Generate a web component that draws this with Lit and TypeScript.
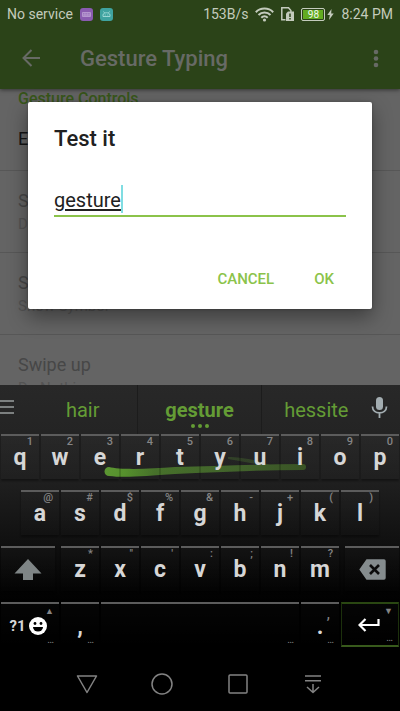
import { LitElement, html, svg, css, nothing } from "lit";
import { customElement, property } from "lit/decorators.js";
import { classMap } from "lit/directives/class-map.js";

@customElement("status-bar")
class StatusBar extends LitElement {
  static styles = css`
    :host {
      display: flex;
      align-items: center;
      height: 28px;
      padding: 0 7px;
      font-size: 14px;
      line-height: 20px;
      color: #c4cbbd;
      white-space: nowrap;
    }
    svg { display: block; flex: none; }
    .left, .right { display: flex; align-items: center; }
    .left { flex: 1; gap: 7px; }
    .right { gap: 7px; }
    .power { display: flex; align-items: center; gap: 1px; }
    .battery {
      position: relative;
      display: flex;
      align-items: center;
      justify-content: center;
      box-sizing: border-box;
      width: 24px;
      height: 13px;
      margin-right: 1px;
      border: 1px solid #c4cbbd;
      border-radius: 2px;
      background: #62ab20;
      box-shadow: inset 0 0 0 1px #2b4318;
      color: #f2f7ec;
      font-size: 10px;
      line-height: 11px;
    }
  `;
  render() {
    return html`
      <div class="left">
        <span>No service</span>
        <svg width="13" height="13" viewBox="0 0 13 13" aria-hidden="true">
          <rect width="13" height="13" rx="3" fill="#8a5bb0" />
          <rect x="2" y="4" width="9" height="5" rx="1" fill="#b596cf" />
          <path d="M3 5.5h7M3 7h7" stroke="#8a5bb0" stroke-width=".6" stroke-dasharray="1 .6" />
        </svg>
        <svg width="13" height="13" viewBox="0 0 13 13" aria-hidden="true">
          <rect width="13" height="13" rx="3" fill="#3fa3a0" />
          <path d="M3 8.500V7c0-3 7-3 7 0v1.500z M3.500 3.500l1 1.300 M9.500 3.500l-1 1.300" fill="none" stroke="#a5dcd9" stroke-width=".9" />
          <path d="M4.800 7h.8M7.400 7h.8" stroke="#a5dcd9" />
        </svg>
      </div>
      <div class="right">
        <span>153B/s</span>
        <svg width="19" height="15" viewBox="0 0 19 15" fill="none" stroke="#c4cbbd" stroke-width="2" aria-hidden="true">
          <path d="M.8 5.200C5.500.4 13.500.4 18.200 5.200M3.500 8c3.300-3.400 8.700-3.400 12 0M6.300 10.700c1.800-1.800 4.600-1.800 6.400 0" />
          <circle cx="9.500" cy="13" r="1.600" fill="#c4cbbd" stroke="none" />
        </svg>
        <svg width="13" height="14" viewBox="0 0 13 14" aria-hidden="true">
          <path d="M4.500 12.700H.8V.8h6.700l2.400 2.700V5" fill="none" stroke="#c4cbbd" stroke-width="1.500" />
          <path d="M5 14V6.500L7 4.500h6V14z" fill="#c4cbbd" />
          <path d="M9 6.500v3.500M9 11v1.500" stroke="#2b4318" stroke-width="1.500" />
        </svg>
        <span class="power">
          <span class="battery">98</span>
          <svg width="7" height="13" viewBox="0 0 7 13" aria-hidden="true">
            <path d="M4.500 1L.3 7h2.500L2 12l4.700-6.500H4.200z" fill="#c4cbbd" />
          </svg>
        </span>
        <span>8:24 PM</span>
      </div>
    `;
  }
}

interface Setting { title: string; summary?: string; enabled?: boolean }

const settings: Setting[] = [
  { title: "E", enabled: true },
  { title: "S", summary: "D" },
  { title: "S", summary: "Show Symbol" },
  { title: "Swipe up", summary: "Do Nothing" },
];

@customElement("settings-page")
class SettingsPage extends LitElement {
  static styles = css`
    :host { display: block; background: #646464; }
    .head { position: relative; background: #2b4318; box-shadow: 0 1px 4px #00000080; }
    .bar {
      display: flex;
      align-items: center;
      height: 61px;
      padding: 0 16px 0 20px;
      box-sizing: border-box;
    }
    .bar button { display: flex; padding: 0; border: 0; background: none; color: #676a65; }
    h1 { flex: 1; margin: 0 0 0 36px; font-size: 22px; font-weight: 500; line-height: 28px; color: #676a65; }
    h2 { margin: 0; padding: 0 18px; font-size: 16px; font-weight: 500; line-height: 20px; color: #38571a; }
    ul { margin: 0; padding: 0; list-style: none; }
    li {
      box-sizing: border-box;
      height: 82px;
      padding: 18px 18px 0;
      border-top: 1px solid #575757;
      color: #474747;
      font-size: 18px;
      line-height: 24px;
    }
    li.enabled { height: 61px; border-top: 0; color: #141414; }
    small { display: block; font-size: 15px; line-height: 22px; color: #535353; }
  `;
  render() {
    return html`
      <div class="head">
        <status-bar></status-bar>
        <div class="bar">
          <button aria-label="Back">
            <svg width="24" height="24" viewBox="0 0 24 24" fill="none" stroke="currentColor" stroke-width="2">
              <path d="M20 11H4M11.500 3L3.500 11l8 8" />
            </svg>
          </button>
          <h1>Gesture Typing</h1>
          <button aria-label="More options">
            <svg width="16" height="24" viewBox="0 0 16 24" fill="currentColor">
              <circle cx="8" cy="5" r="2.300" /><circle cx="8" cy="11.500" r="2.300" /><circle cx="8" cy="18" r="2.300" />
            </svg>
          </button>
        </div>
      </div>
      <h2>Gesture Controls</h2>
      <ul>
        ${settings.map((s) => html`
          <li class=${classMap({ enabled: !!s.enabled })}>
            ${s.title}${s.summary ? html`<small>${s.summary}</small>` : nothing}
          </li>`)}
      </ul>
    `;
  }
}

@customElement("test-dialog")
class TestDialog extends LitElement {
  static styles = css`
    :host {
      display: block;
      box-sizing: border-box;
      padding: 24px 26px 12px;
      background: #fff;
      border-radius: 2px;
      box-shadow: 0 8px 20px #00000066, 0 0 3px #00000040;
    }
    label { display: block; font-size: 22px; font-weight: 500; line-height: 26px; color: #212121; }
    .field {
      display: flex;
      align-items: flex-end;
      height: 32px;
      margin-top: 31px;
      border-bottom: 2px solid #8bc34a;
    }
    input {
      field-sizing: content;
      height: 30px;
      padding: 0;
      border: 0;
      outline: 0;
      background: none;
      font: 20px/30px Roboto, sans-serif;
      color: #212121;
      text-decoration: underline;
      text-underline-offset: 2px;
    }
    .caret { width: 2px; height: 28px; margin-bottom: 2px; background: #80dde2; }
    .actions { display: flex; justify-content: flex-end; gap: 24px; margin-top: 44px; }
    .actions button {
      height: 36px;
      padding: 0 12px 0 8px;
      border: 0;
      background: none;
      font: 500 15px/20px Roboto, sans-serif;
      color: #8bc34a;
    }
    .actions button:first-child { padding-right: 8px; }
  `;
  render() {
    return html`
      <label for="word">Test it</label>
      <div class="field"><input id="word" type="text" .value=${"gesture"} value="gesture" /><span class="caret"></span></div>
      <div class="actions"><button>CANCEL</button><button>OK</button></div>
    `;
  }
}

const shiftIcon = svg`<svg width="28" height="22" viewBox="0 0 28 22"><path d="M14 0L27.500 14.500H19V21H9V14.500H.5z" fill="#7f8586"/></svg>`;
const deleteIcon = svg`<svg width="27" height="21" viewBox="0 0 27 21"><path d="M7.500.3H25a1.700 1.700 0 0 1 1.700 1.700v17a1.700 1.700 0 0 1-1.700 1.700H7.500L.3 10.500z" fill="#858c8e"/><path d="M11 6l9 9M20 6l-9 9" stroke="#0c0c0c" stroke-width="2.600"/></svg>`;
const smileIcon = svg`<svg width="18" height="18" viewBox="0 0 18 18"><circle cx="9" cy="9" r="9" fill="#fff"/><circle cx="6" cy="6.500" r="1.400"/><circle cx="12" cy="6.500" r="1.400"/><path d="M4 10h10a5 4.500 0 0 1-10 0z"/></svg>`;
const enterIcon = svg`<svg width="22" height="14" viewBox="0 0 22 14" fill="none" stroke="#fff" stroke-width="2.200"><path d="M20.500 1v6H2M7.500 1L1.500 7l6 6"/></svg>`;

interface Key {
  label?: string;
  name?: string;
  icon?: unknown;
  hint?: string;
  span?: number;
  kind?: string;
  arrow?: string;
  more?: boolean;
}

const keys = (letters: string, hints: string): Key[] =>
  [...letters].map((label, i) => ({ label, hint: hints[i] }));

const rows: Key[][] = [
  keys("qwertyuiop", "1234567890"),
  keys("asdfghjkl", "@#$%&-+()"),
  [
    { name: "Shift", icon: shiftIcon, span: 3, kind: "shift" },
    ...keys("zxcvbnm", "*\"':;!?"),
    { name: "Delete", icon: deleteIcon, span: 3, kind: "delete" },
  ],
  [
    { label: "?1", name: "Symbols and emoji", icon: smileIcon, span: 3, kind: "symbols", arrow: "▲", more: true },
    { label: ",", kind: "mark", more: true },
    { name: "Space", span: 10, more: true },
    { label: ".", kind: "mark", hint: ",", more: true },
    { name: "Enter", icon: enterIcon, span: 3, kind: "enter", arrow: "▼", more: true },
  ],
];

@customElement("key-button")
class KeyButton extends LitElement {
  @property({ attribute: false }) key: Key = {};
  static styles = css`
    :host { display: block; }
    button {
      position: relative;
      display: flex;
      align-items: center;
      justify-content: center;
      box-sizing: border-box;
      width: 100%;
      height: 45px;
      padding: 0;
      border: 0;
      border-top: 2px solid #5c5c5c;
      background: linear-gradient(#ffffff05, #ffffff00);
      box-shadow: 0 2px 2px #00000060;
      color: #d6d6d6;
      font: bold 23px/26px Roboto, sans-serif;
    }
    svg { display: block; flex: none; }
    .symbols { gap: 3px; padding-right: 4px; font-size: 15px; }
    .mark { padding-top: 2px; }
    .enter { border: 1px solid #1c300c; border-top: 2px solid #2a4712; border-bottom: 2px solid #385a1c; padding-right: 2px; }
    .hint, .arrow, .more { position: absolute; color: #858585; font-size: 11px; line-height: 12px; }
    .hint { top: 0; right: 6px; font-weight: 500; }
    .mark .hint { top: 4px; right: 9px; font-size: 14px; }
    .arrow { top: 1px; right: 5px; font-size: 9px; }
    .more { right: 5px; bottom: 1px; font-size: 10px; font-weight: 400; }
  `;
  render() {
    const k = this.key;
    return html`
      <button class=${k.kind ?? "letter"} aria-label=${k.name ?? k.label ?? ""}>
        ${k.label ? html`<span>${k.label}</span>` : nothing}${k.icon ?? nothing}
        ${k.hint ? html`<span class="hint">${k.hint}</span>` : nothing}
        ${k.arrow ? html`<span class="arrow">${k.arrow}</span>` : nothing}
        ${k.more ? html`<span class="more">…</span>` : nothing}
      </button>
    `;
  }
}

@customElement("soft-keyboard")
class SoftKeyboard extends LitElement {
  static styles = css`
    :host { display: block; background: linear-gradient(#282828, #202020 34%, #101010 58%, #000 80%); }
    .strip { display: flex; height: 49px; }
    .strip button { position: relative; padding: 0; border: 0; background: none; font: 20px/46px Roboto, sans-serif; color: #649c35; }
    .strip .menu { width: 28px; display: flex; padding-top: 14px; }
    .strip .word { flex: 110 1 0; }
    .strip .chosen {
      flex-grow: 123;
      font-weight: bold;
      border: solid #1c1c1c;
      border-width: 0 1px;
    }
    .dots { position: absolute; left: 0; right: 0; bottom: 6px; display: flex; justify-content: center; gap: 3px; }
    .dots i { width: 4px; height: 4px; border-radius: 50%; background: #649c35; }
    .strip .mic { width: 29px; display: flex; padding-top: 11px; }
    .rows { position: relative; }
    .row { display: grid; grid-template-columns: repeat(20, minmax(0, 1fr)); height: 56px; }
    key-button { grid-column: span 2; margin: 0 1px; }
    .wide { grid-column: span 3; }
    .space { grid-column: span 10; }
    .indent { grid-column: 2 / span 2; }
    .shift { margin-right: 5px; }
    .delete { margin-left: 5px; }
    .trail { position: absolute; top: 0; left: 0; width: 100%; height: 56px; pointer-events: none; }
  `;
  render() {
    return html`
      <div class="strip">
        <button class="menu" aria-label="Menu">
          <svg width="14" height="16" viewBox="0 0 14 16" stroke="#7c8080" stroke-width="2"><path d="M0 2h14M0 8h14M0 14h14" /></svg>
        </button>
        <button class="word">hair</button>
        <button class="word chosen">gesture<span class="dots"><i></i><i></i><i></i></span></button>
        <button class="word">hessite</button>
        <button class="mic" aria-label="Voice input">
          <svg width="17" height="23" viewBox="0 0 17 23">
            <rect x="5" y="1" width="7" height="13" rx="3.500" fill="#a3adb1" />
            <path d="M1.500 10.500c0 8.500 14 8.500 14 0M8.500 17v5" fill="none" stroke="#a3adb1" stroke-width="1.800" />
          </svg>
        </button>
      </div>
      <div class="rows">
        <svg class="trail" viewBox="0 0 400 56" preserveAspectRatio="none" aria-hidden="true">
          <defs>
            <linearGradient id="fade">
              <stop offset="0" stop-color="#5c9632" /><stop offset=".1" stop-color="#55902c" />
              <stop offset=".25" stop-color="#46702a" /><stop offset=".7" stop-color="#40602a" />
              <stop offset="1" stop-color="#385224" />
            </linearGradient>
          </defs>
          <path d="M109 33C120 36 150 35 175 33C215 32 260 30 303 30A2.500 2.500 0 0 1 303 36C260 36 220 38 175 40C145 42 125 44 109 42A4.500 4.500 0 0 1 109 33z" fill="url(#fade)" />
          <path d="M228 23C240 23 258 26 270 31C256 31 242 27 228 25z" fill="#5c9632" opacity=".25" />
        </svg>
        ${rows.map((row, r) => html`
          <div class="row">
            ${row.map((k, i) => html`
              <key-button .key=${k} class=${classMap({
                wide: k.span === 3,
                space: k.span === 10,
                indent: r === 1 && i === 0,
                shift: k.kind === "shift",
                delete: k.kind === "delete",
              })}></key-button>`)}
          </div>`)}
      </div>
    `;
  }
}

@customElement("nav-bar")
class NavBar extends LitElement {
  static styles = css`
    :host { display: flex; box-sizing: border-box; height: 53px; padding: 0 49px 2px; background: #000; }
    button { flex: 1; display: flex; align-items: center; justify-content: center; padding: 0; border: 0; background: none; }
  `;
  private icon(name: string, shape: unknown) {
    return html`<button aria-label=${name}>
      <svg width="22" height="22" viewBox="0 0 22 22" fill="none" stroke="#838383" stroke-width="1.500" stroke-linejoin="round">${shape}</svg>
    </button>`;
  }
  render() {
    return html`
      ${this.icon("Back", svg`<path d="M1.500 3h19L11 19.500z"/>`)}
      ${this.icon("Home", svg`<circle cx="11" cy="11" r="10"/>`)}
      ${this.icon("Recent apps", svg`<rect x="2" y="2" width="18" height="18" rx="1"/>`)}
      ${this.icon("Hide keyboard", svg`<path d="M3 3h16M3 7.800h16M11 11v8M5 14l6 5.500 6-5.500"/>`)}
    `;
  }
}

@customElement("app-root")
class AppRoot extends LitElement {
  static styles = css`
    :host { display: flex; flex-direction: column; height: 100vh; overflow: hidden; font-family: Roboto, sans-serif; }
    .stage { position: relative; flex: 1; min-height: 0; overflow: hidden; background: #646464; }
    test-dialog { position: absolute; top: 102px; left: 28px; right: 28px; }
  `;
  render() {
    return html`
      <main class="stage">
        <settings-page></settings-page>
        <test-dialog role="dialog" aria-label="Test it"></test-dialog>
      </main>
      <soft-keyboard></soft-keyboard>
      <nav-bar></nav-bar>
    `;
  }
}
